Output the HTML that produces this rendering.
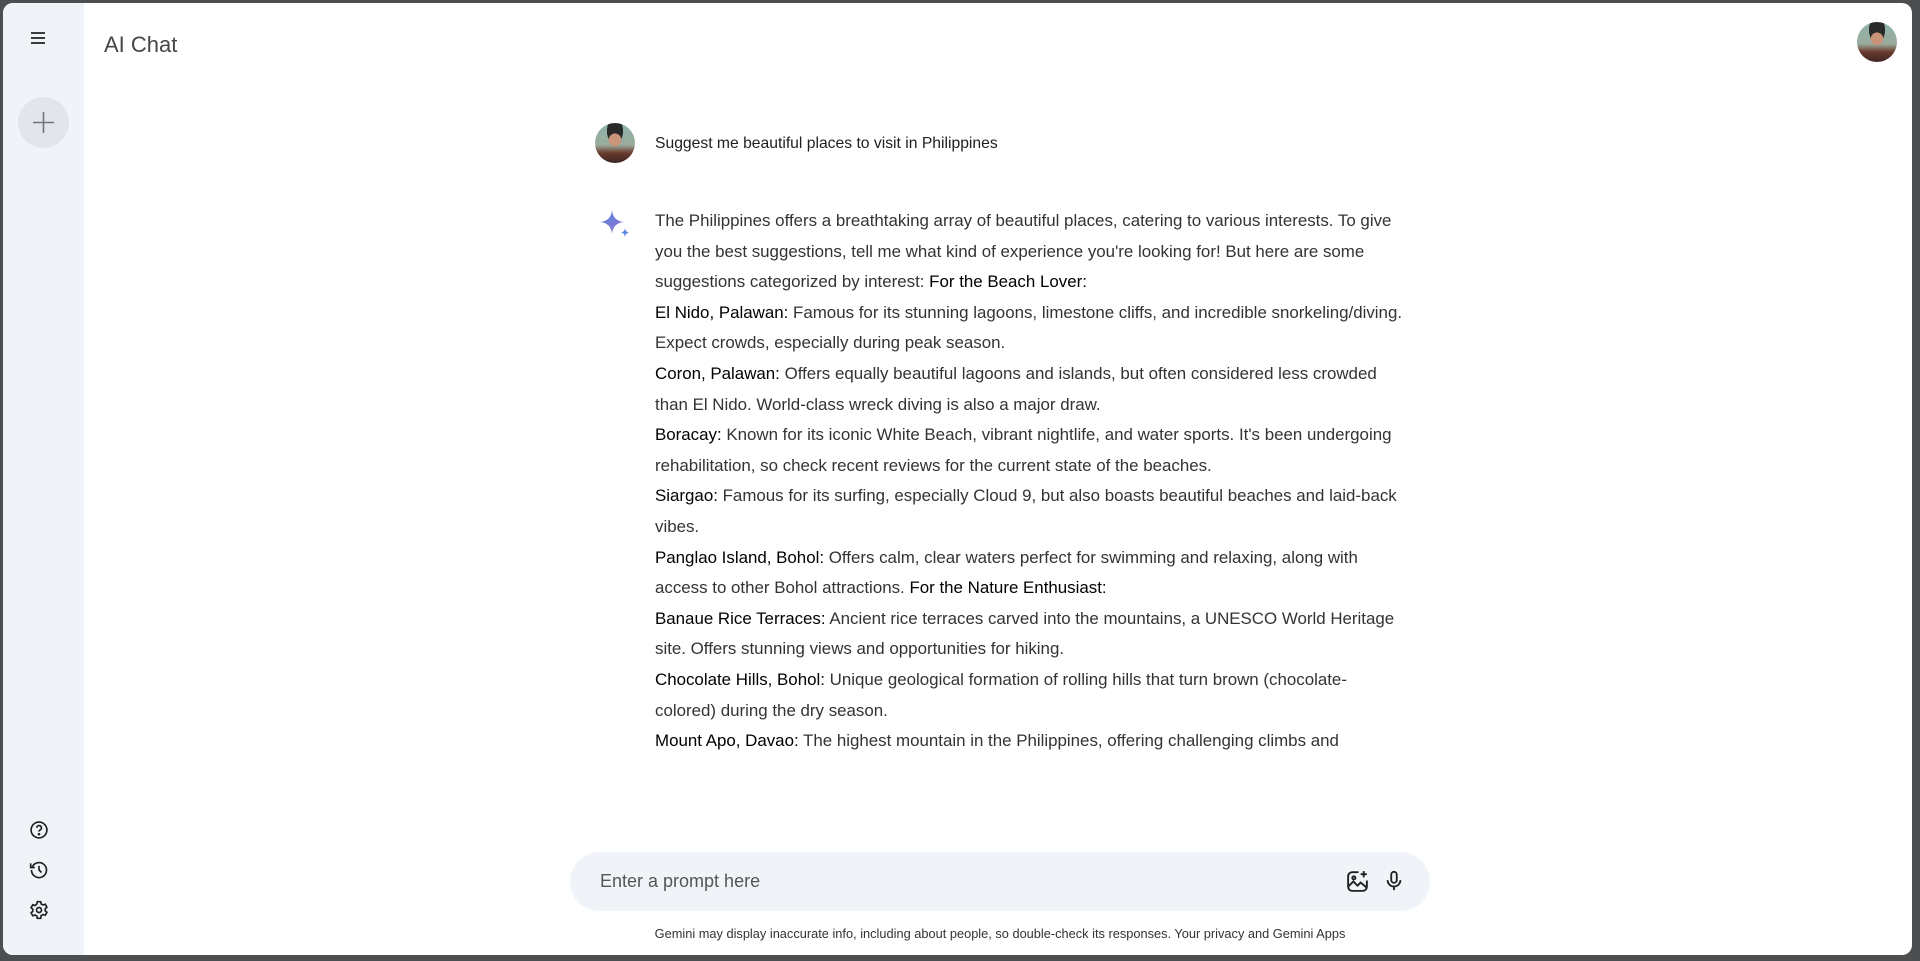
<!DOCTYPE html>
<html><head><meta charset="utf-8"><style>
*{margin:0;padding:0;box-sizing:border-box}
body{width:1920px;height:961px;background:#4d4e50;overflow:hidden;font-family:"Liberation Sans",sans-serif;position:relative}
.frame{position:absolute;left:3px;top:3px;width:1909px;height:952px;background:#fff;border-radius:10px;overflow:hidden}
.side{position:absolute;left:0;top:0;width:81px;height:100%;background:#f0f4f9}
.ic{position:absolute}
.title{position:absolute;left:101px;top:29px;font-size:22px;color:#444746}
.av{position:absolute;border-radius:50%;background:radial-gradient(circle at 50% 42%,#c99478 0 20%,transparent 21%),radial-gradient(ellipse at 50% 20%,#2a2a2a 0 28%,transparent 29%),linear-gradient(180deg,#8fb5ad 0%,#9aab9c 55%,#6a3a2c 75%,#3a2424 100%)}
.user{position:absolute;left:652px;top:132px;font-size:15.7px;color:#1f1f1f}
.resp{position:absolute;left:652px;top:203px;font-size:16.9px;line-height:30.6px;color:#333;white-space:nowrap}
.resp b{font-weight:normal;color:#000}
.input{position:absolute;left:567px;top:849px;width:860px;height:59px;background:#f0f4f9;border-radius:30px}
.ph{position:absolute;left:30px;top:19px;font-size:18px;color:#555}
.foot{position:absolute;left:567px;width:860px;top:923px;text-align:center;font-size:12.8px;color:#333;white-space:nowrap}
</style></head><body>
<div class="frame">
<div class="side">
<svg class="ic" style="left:27px;top:27px" width="16" height="16" viewBox="0 0 16 16"><path d="M1 3h14M1 8h14M1 13h14" stroke="#1f1f1f" stroke-width="1.8"/></svg>
<div style="position:absolute;left:15px;top:94px;width:51px;height:51px;border-radius:50%;background:#e2e6eb"></div>
<svg class="ic" style="left:28px;top:107px" width="25" height="25" viewBox="0 0 25 25"><path d="M12.5 2v21M2 12.5h21" stroke="#70757a" stroke-width="1.6"/></svg>
<svg class="ic" style="left:26px;top:817px" width="20" height="20" viewBox="0 0 24 24" fill="none" stroke="#1f1f1f" stroke-width="2"><circle cx="12" cy="12" r="9.5"/><path d="M9.3 9.5a2.8 2.8 0 1 1 3.8 2.6c-.8.4-1.1.9-1.1 1.8"/><circle cx="12" cy="17" r=".6" fill="#1f1f1f"/></svg>
<svg class="ic" style="left:26px;top:857px" width="20" height="20" viewBox="0 0 24 24" fill="none" stroke="#1f1f1f" stroke-width="2"><path d="M4 8A9 9 0 1 1 3 12"/><path d="M2 4v5h5" /><path d="M12 7v5l3 3"/></svg>
<svg class="ic" style="left:26px;top:897px" width="20" height="20" viewBox="0 0 24 24" fill="none" stroke="#1f1f1f" stroke-width="2"><circle cx="12" cy="12" r="3"/><path d="M10 2h4l.6 2.7 2.3 1.3 2.6-.9 2 3.5-2 1.8v2.6l2 1.8-2 3.5-2.6-.9-2.3 1.3L14 22h-4l-.6-2.7-2.3-1.3-2.6.9-2-3.5 2-1.8v-2.6l-2-1.8 2-3.5 2.6.9L9.4 4.7z"/></svg>
</div>
<div class="title">AI Chat</div>
<div class="av" style="left:1854px;top:19px;width:40px;height:40px"></div>
<div class="av" style="left:592px;top:120px;width:40px;height:40px"></div>
<div class="user">Suggest me beautiful places to visit in Philippines</div>
<svg class="ic" style="left:596px;top:206px" width="33" height="33" viewBox="0 0 33 33"><defs><linearGradient id="g" x1="0" y1="0" x2="1" y2="1"><stop offset="0" stop-color="#4f86e8"/><stop offset="1" stop-color="#9b72cb"/></linearGradient></defs><path d="M13 1Q14 12 25 13Q14 14 13 25Q12 14 1 13Q12 12 13 1Z" fill="url(#g)"/><path d="M26 19Q26.4 23 30 23.5Q26.4 24 26 28Q25.6 24 22 23.5Q25.6 23 26 19Z" fill="#5a88e0"/></svg>
<div class="resp">The Philippines offers a breathtaking array of beautiful places, catering to various interests. To give<br>you the best suggestions, tell me what kind of experience you're looking for! But here are some<br>suggestions categorized by interest: <b>For the Beach Lover:</b><br><b>El Nido, Palawan:</b> Famous for its stunning lagoons, limestone cliffs, and incredible snorkeling/diving.<br>Expect crowds, especially during peak season.<br><b>Coron, Palawan:</b> Offers equally beautiful lagoons and islands, but often considered less crowded<br>than El Nido. World-class wreck diving is also a major draw.<br><b>Boracay:</b> Known for its iconic White Beach, vibrant nightlife, and water sports. It's been undergoing<br>rehabilitation, so check recent reviews for the current state of the beaches.<br><b>Siargao:</b> Famous for its surfing, especially Cloud 9, but also boasts beautiful beaches and laid-back<br>vibes.<br><b>Panglao Island, Bohol:</b> Offers calm, clear waters perfect for swimming and relaxing, along with<br>access to other Bohol attractions. <b>For the Nature Enthusiast:</b><br><b>Banaue Rice Terraces:</b> Ancient rice terraces carved into the mountains, a UNESCO World Heritage<br>site. Offers stunning views and opportunities for hiking.<br><b>Chocolate Hills, Bohol:</b> Unique geological formation of rolling hills that turn brown (chocolate-<br>colored) during the dry season.<br><b>Mount Apo, Davao:</b> The highest mountain in the Philippines, offering challenging climbs and</div>
<div class="input"><div class="ph">Enter a prompt here</div>
<svg class="ic" style="left:775px;top:17px" width="25" height="25" viewBox="0 0 24 24" fill="none" stroke="#1f1f1f" stroke-width="1.8"><path d="M13 3H7a4 4 0 0 0-4 4v10a4 4 0 0 0 4 4h10a4 4 0 0 0 4-4v-6"/><path d="M3 17l5-5 4 4 3-3 6 5"/><circle cx="8.5" cy="8.5" r="1.5"/><path d="M18 2v6M15 5h6"/></svg>
<svg class="ic" style="left:813px;top:18px" width="22" height="22" viewBox="0 0 24 24" fill="none" stroke="#1f1f1f" stroke-width="2"><rect x="9" y="2" width="6" height="12" rx="3"/><path d="M5 11a7 7 0 0 0 14 0M12 18v4"/></svg>
</div>
<div class="foot">Gemini may display inaccurate info, including about people, so double-check its responses. Your privacy and Gemini Apps</div>
</div>
</body></html>
